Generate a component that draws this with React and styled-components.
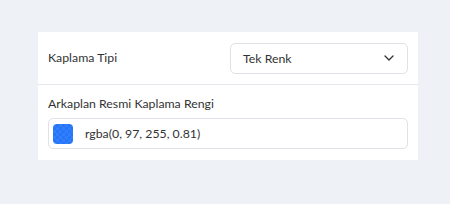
import React from 'react'
import styled, { createGlobalStyle } from 'styled-components'

const Global = createGlobalStyle`
  html, body { margin: 0; padding: 0; background: #eef2f6; }
  body { font-family: Lato, "Noto Sans", sans-serif; }
`

const Page = styled.div`
  padding: 32px 32px 0 38px;
  width: 450px;
  height: 204px;
  box-sizing: border-box;
`

const Card = styled.div`
  width: 380px;
  background: #fff;
`

const Row = styled.div`
  display: flex;
  align-items: center;
  justify-content: space-between;
  height: 52px;
  padding: 0 10px;
  border-bottom: 1px solid #e4e7eb;
`

const Stack = styled.div`
  display: flex;
  flex-direction: column;
  gap: 6px;
  padding: 11px 10px 11px;
`

const Label = styled.span`
  font-size: 12.3px;
  line-height: 16px;
  color: #333;
`

const Field = styled.div`
  display: flex;
  align-items: center;
  box-sizing: border-box;
  height: 31px;
  width: ${p => p.$width || '100%'};
  padding: ${p => p.$pad || '0 12px'};
  border: 1px solid #dfe2e6;
  border-radius: 5px;
  font-size: 12.3px;
  color: #333;
  justify-content: ${p => p.$spread ? 'space-between' : 'flex-start'};
`

const Swatch = styled.div`
  width: 20px;
  height: 20px;
  border-radius: 4px;
  margin-right: 12px;
  background-color: #fff;
  background-image:
    linear-gradient(rgba(0, 97, 255, 0.81), rgba(0, 97, 255, 0.81)),
    conic-gradient(#ccc 25%, #fff 0 50%, #ccc 0 75%, #fff 0);
  background-size: 100% 100%, 6px 6px;
`

export default function App() {
  return (
    <>
      <Global />
      <Page>
        <Card>
          <Row>
            <Label>Kaplama Tipi</Label>
            <Field $width="178px" $spread>
              <span>Tek Renk</span>
              <svg width="12" height="12" viewBox="0 0 12 12" fill="none">
                <path d="M2 4l4 4 4-4" stroke="#333" strokeWidth="1.3" strokeLinecap="round" strokeLinejoin="round" />
              </svg>
            </Field>
          </Row>
          <Stack>
            <Label>Arkaplan Resmi Kaplama Rengi</Label>
            <Field $pad="0 4px">
              <Swatch />
              <span>rgba(0, 97, 255, 0.81)</span>
            </Field>
          </Stack>
        </Card>
      </Page>
    </>
  )
}
